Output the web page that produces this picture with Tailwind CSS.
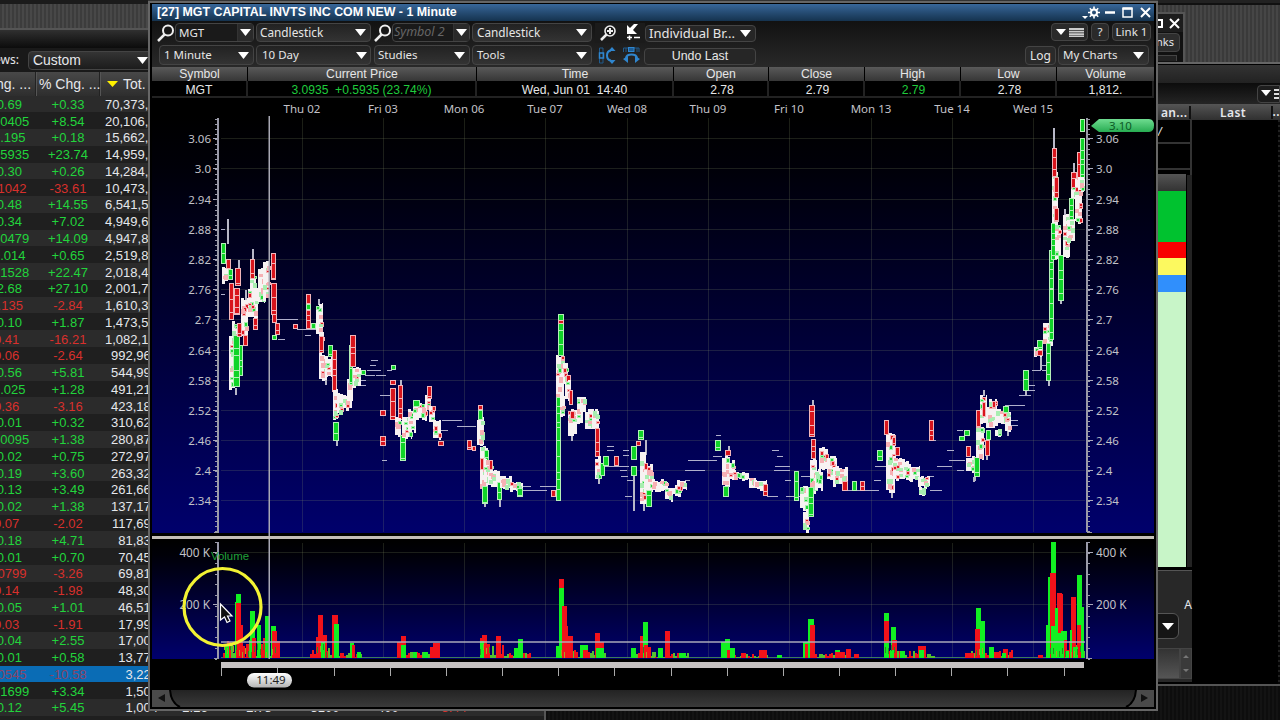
<!DOCTYPE html>
<html lang="en">
<head>
    <meta charset="UTF-8">
    <meta name="viewport" content="width=device-width, initial-scale=1.0">
    <title>MGT - 1 Minute</title>
    <script src="https://cdn.jsdelivr.net/npm/@tailwindcss/browser@4"></script>
</head>
<body class="relative w-[1280px] h-[720px] overflow-hidden bg-black font-['Liberation_Sans',sans-serif] text-[13px] text-gray-200">

    <!-- Watch list window -->
    <div class="absolute left-0 top-0 w-[546px] h-[720px] overflow-hidden bg-[#202020] border-r-2 border-[#555]">
        <div class="h-[28px] border-t-4 border-[#1b1b1b] bg-[repeating-linear-gradient(90deg,#3c3c3c_0_2px,#484848_2px_4px)]"></div>
        <div class="h-[2px] bg-[#555]"></div>
        <div class="h-[18px] bg-linear-to-b from-[#303030] to-[#0c0c0c]"></div>
        <div class="h-[24px] flex items-center bg-[#191919] font-['Noto_Sans',sans-serif]">
            <span class="w-[27px] -ml-[6px] text-[12px] leading-none whitespace-nowrap">ews:</span>
            <div class="ml-[7px] w-[124px] h-[19px] flex items-center justify-between rounded border border-[#444] bg-linear-to-b from-[#343434] to-[#1c1c1c] pl-[4px] pr-[3px] pt-px font-['Liberation_Sans',sans-serif] text-[13.9px]">
                Custom
                <svg width="11" height="7"><path d="M0 0H11L5.5 7Z" fill="#fff"/></svg>
            </div>
        </div>
        <div class="h-[23.5px] flex bg-linear-to-b from-[#484848] to-[#2e2e2e] text-[14px] items-center whitespace-nowrap">
            <div class="w-[36px] h-full pt-[2px] border-r border-[#222]"><span class="-ml-[4px]">hg. ...</span></div>
            <div class="w-[64px] h-full pt-[2px] pl-[2px] border-r border-[#222] border-l border-l-[#555]">% Chg. ...</div>
            <div class="h-full flex items-center gap-[5px] pl-[6px] pt-px border-l border-[#555]"><svg width="11" height="6"><path d="M0 0H11L5.5 6Z" fill="#fff200"/></svg>Tot.</div>
        </div>
        <div id="rows"></div>
    </div>

    <!-- Windows on the right side of the desktop -->
    <div class="absolute left-[1150px] top-0 w-[130px] h-[720px] overflow-hidden bg-black">
        <div class="h-[3px] bg-[#222]"></div>
        <div class="h-[59px] flex bg-[repeating-linear-gradient(90deg,#3a3a3a_0_2px,#464646_2px_4px)] border-t-2 border-[#111]">
            <div class="mt-[7px] w-[35px] border-t-2 border-r-2 border-[#555] bg-[#111]">
                <div class="h-[18px] flex items-center justify-end gap-[6px] pr-[3px] bg-[#1d1d1d]">
                    <div class="size-[9px] border-2 border-white"></div>
                    <svg width="11" height="11" stroke="#fff" stroke-width="2"><path d="M1 1L10 10M10 1L1 10"/></svg>
                </div>
                <div class="h-[19px] mt-px mr-[3px] flex items-center justify-end pr-[5px] rounded border border-[#444] bg-[#2d2d2d] font-['Noto_Sans',sans-serif] text-[11px]">Links</div>
                <div class="mt-[3px] mr-[6px] h-[6px] border-t border-r border-[#444] bg-[#222]"></div>
            </div>
        </div>
        <div class="h-[2px] bg-[#666]"></div>
        <div class="h-[18px] mt-px bg-linear-to-b from-[#333] to-[#222]"></div>
        <div class="h-[21px] flex justify-end items-center bg-linear-to-b from-[#0c0c0c] to-[#252525]">
            <div class="w-[23px] h-[18px] flex items-center gap-[3px] pl-[3px] rounded-l border border-[#444] bg-[#1d1d1d]">
                <svg width="10" height="7"><path d="M0 0H10L5 6Z" fill="#fff"/></svg>
                <svg width="5" height="10" fill="#ddd"><path d="M0 0H5V2H0ZM0 4H5V6H0ZM0 8H5V10H0Z"/></svg>
            </div>
        </div>
        <div class="h-[16px] flex items-center text-[12px] font-semibold tracking-[0.4px] bg-linear-to-b from-[#555] to-[#303030] font-['Noto_Sans',sans-serif] leading-none">
            <div class="w-[41px] pt-px text-right border-r-2 border-[#111] pr-px">an...</div>
            <div class="w-[83px] pt-px pl-[5px] text-center border-r-2 border-[#111]">Last</div>
            <div>..</div>
        </div>
        <div class="h-[564px] flex">
            <div class="w-[42px] border-r-2 border-[#333] h-[55px]">
                <div class="h-[24px] pt-[5px] pl-[8px] border-b-2 border-[#333] italic leading-none">/</div>
                <div class="h-[26px] border-b-2 border-[#333]"></div>
                <div class="mt-[4px] h-[17px] w-[36px] bg-linear-to-b from-[#555] to-[#333]"></div>
                <div class="h-[51px] w-[36px] bg-[#00c22f]"></div>
                <div class="h-[16px] w-[36px] bg-[#f80000]"></div>
                <div class="h-[17px] w-[36px] bg-[#fcf95f]"></div>
                <div class="h-[17px] w-[36px] bg-[#308ffc]"></div>
                <div class="h-[275px] w-[36px] bg-[#c8f5c8]"></div>
                <div class="mt-[3px] w-[42px] h-[112px] border-t border-[#555] bg-[#282828]">
                    <div class="h-[42px] pt-[28px] text-right font-['Noto_Sans',sans-serif] text-[12px] leading-none">A</div>
                    <div class="h-[26px] w-[29px] flex items-center justify-end pr-[4px] border border-[#555] rounded-md bg-[#151515]"><svg width="12" height="7"><path d="M0 0H12L6 7Z" fill="#fff"/></svg></div>
                    <div class="mt-[9px] h-[31px] flex">
                        <div class="w-[30px] border border-[#444] bg-linear-to-b from-[#333] to-[#555]"></div>
                        <div class="w-[12px] border border-[#444] bg-[#3a3a3a]"><svg width="10" height="30" fill="#777"><path d="M5 6L8 9H2ZM2 20H8L5 23Z"/></svg></div>
                    </div>
                </div>
            </div>
            <!-- frame right of the colour column -->
            <div class="-ml-[5px] mt-[55px] w-[5px] h-[392px] bg-[#232323]"></div>
            <div class="flex-1"></div>
            <div class="w-[2px] bg-[repeating-linear-gradient(180deg,#222_0_2px,#060606_2px_5px)]"></div>
        </div>
        <div class="h-[2px] bg-[#555]"></div>
        <div class="h-[35px] bg-[repeating-linear-gradient(90deg,#0d0d0d_0_2px,#131313_2px_4px)]"></div>
    </div>
    <div class="absolute left-[546px] top-[711px] w-[610px] h-[9px] bg-[repeating-linear-gradient(90deg,#0d0d0d_0_2px,#131313_2px_4px)]"></div>
    <div class="absolute left-[148px] top-0 w-[1010px] h-[4px] bg-[#333]"></div>

    <!-- Chart window -->
    <div class="absolute left-[148px] top-[1px] w-[1010px] h-[710px] flex flex-col border-2 border-[#666] bg-black px-[2px] pt-px text-[#e6e6e6]">
        <div class="h-[17px] shrink-0 flex items-center pl-[5px] pr-[2px] bg-linear-to-b from-[#38679a] to-[#15334f] text-[12.4px] font-bold text-white whitespace-nowrap">
            <span class="-mt-px">[27] MGT CAPITAL INVTS INC COM NEW - 1 Minute</span>
            <svg class="ml-auto" width="70" height="15" viewBox="0 0 70 15" fill="none" stroke="#fff">
                <path d="M0 11H6L3 14Z" fill="#fff" stroke="none"/>
                <circle cx="12" cy="7.500" r="3" stroke-width="2"/>
                <path d="M12 1.500V4.500M12 10.500V13.500M6 7.500H9M15 7.500H18M7.800 3.300L9.700 5.200M14.300 9.800L16.200 11.700M16.200 3.300L14.300 5.200M9.700 9.800L7.800 11.700" stroke-width="1.600"/>
                <path d="M23 7.500H33" stroke-width="2.500"/>
                <rect x="41" y="3.500" width="9" height="8.500" stroke-width="1.500"/><path d="M40.500 3.500H50.500" stroke-width="2.500"/>
                <path d="M59 3L68 12M68 3L59 12" stroke-width="2"/>
            </svg>
        </div>

        <!-- Toolbar -->
        <div class="h-[46px] shrink-0 bg-linear-to-b from-[#121212] to-[#292929] font-['Noto_Sans',sans-serif] text-[11.5px] leading-none whitespace-nowrap">
            <div class="h-[22px] pt-px flex items-center">
                <svg class="ml-[4px]" width="19" height="20" fill="none" stroke="#eee"><circle cx="12" cy="7.500" r="5" stroke-width="2"/><path d="M8.500 11.500L2 18" stroke-width="2.500"/></svg>
                <div class="w-[79px] h-[19px] flex items-center rounded border border-[#444] bg-[#1a1a1a]">
                    <span class="flex-1 pl-[3px]">MGT</span>
                    <span class="w-[16px] h-full flex items-center justify-center border-l border-[#333] bg-[#2a2a2a]"><svg width="11" height="7"><path d="M0 0H11L5.500 7Z" fill="#fff"/></svg></span>
                </div>
                <div class="ml-[2px] w-[115px] h-[19px] flex items-center justify-between pl-[3px] pr-[4px] rounded border border-[#444] bg-linear-to-b from-[#222] to-[#333] text-[11.8px]">Candlestick<svg width="11" height="7"><path d="M0 0H11L5.500 7Z" fill="#fff"/></svg></div>
                <svg class="ml-[2px]" width="19" height="20" fill="none" stroke="#eee"><circle cx="12" cy="7.500" r="5" stroke-width="2"/><path d="M8.500 11.500L2 18" stroke-width="2.500"/></svg>
                <div class="w-[78px] h-[19px] flex items-center rounded border border-[#444] bg-[#1a1a1a]">
                    <span class="flex-1 pb-px pl-px italic text-[12.5px] text-[#666]">Symbol 2</span>
                    <span class="w-[16px] h-full flex items-center justify-center border-l border-[#333] bg-[#2a2a2a]"><svg width="11" height="7"><path d="M0 0H11L5.500 7Z" fill="#fff"/></svg></span>
                </div>
                <div class="ml-[2px] w-[120px] h-[19px] flex items-center justify-between px-[4px] rounded border border-[#444] bg-linear-to-b from-[#222] to-[#333] text-[11.8px]">Candlestick<svg width="11" height="7"><path d="M0 0H11L5.500 7Z" fill="#fff"/></svg></div>
                <div class="ml-[3px] w-[26px] h-[20px] flex items-center justify-center bg-[#1b1b1b]"><svg width="18" height="18" fill="none" stroke="#eee"><circle cx="11" cy="7" r="5" stroke-width="1.600"/><path d="M7.500 10.500L2 16" stroke-width="2.500"/><path d="M8 7H14M11 4V10" stroke-width="2"/></svg></div>
                <div class="w-[24px] h-[20px] flex items-center justify-center bg-[#1b1b1b]"><svg width="16" height="17" fill="#fff"><path d="M2 1L5 4L9 0L13 0L8 6L12 10H2Z"/><path d="M2 13.500H7M4.500 11.500V16M9 13.500H15" stroke="#fff" stroke-width="1.600"/></svg></div>
                <div class="w-[111px] h-[17px] mt-[2px] flex items-center justify-between pl-[3px] pr-[4px] rounded border border-[#444] bg-[#262626] text-[13px]">Individual Br...<svg width="11" height="7"><path d="M0 0H11L5.500 7Z" fill="#fff"/></svg></div>
                <div class="ml-auto mb-px w-[37px] h-[18px] flex items-center justify-center gap-[3px] rounded border border-[#444] bg-[#2a2a2a]">
                    <svg width="10" height="6"><path d="M0 0H10L5 6Z" fill="#fff"/></svg>
                    <svg width="15" height="9" fill="#ccc"><path d="M0 0H15V2H0ZM0 2.800H15V4.500H0ZM0 5.300H15V7H0ZM0 7.600H15V9H0Z"/></svg>
                </div>
                <div class="ml-[3px] mb-px w-[18px] h-[18px] flex items-center justify-center rounded border border-[#444] bg-[#2a2a2a]">?</div>
                <div class="ml-[3px] mr-[3px] mb-px w-[39px] h-[18px] flex items-center justify-center rounded border border-[#444] bg-[#2a2a2a]">Link 1</div>
            </div>
            <div class="h-[24px] flex items-center">
                <div class="ml-[7px] w-[95px] h-[20px] flex items-center justify-between px-[4px] rounded border border-[#444] bg-linear-to-b from-[#222] to-[#333]">1 Minute<svg width="11" height="7"><path d="M0 0H11L5.500 7Z" fill="#fff"/></svg></div>
                <div class="ml-[2px] w-[115px] h-[20px] flex items-center justify-between pl-[5px] pr-[3px] rounded border border-[#444] bg-linear-to-b from-[#222] to-[#333]">10 Day<svg width="11" height="7"><path d="M0 0H11L5.500 7Z" fill="#fff"/></svg></div>
                <div class="ml-[3px] w-[96px] h-[20px] flex items-center justify-between pl-[3px] pr-[4px] rounded border border-[#444] bg-linear-to-b from-[#222] to-[#333]">Studies<svg width="11" height="7"><path d="M0 0H11L5.500 7Z" fill="#fff"/></svg></div>
                <div class="ml-[2px] w-[120px] h-[20px] flex items-center justify-between px-[4px] rounded border border-[#444] bg-linear-to-b from-[#222] to-[#333]">Tools<svg width="11" height="7"><path d="M0 0H11L5.500 7Z" fill="#fff"/></svg></div>
                <svg class="ml-[6px]" width="19" height="19" fill="none" stroke="#2f86cf"><path d="M1.500 4V2H5V17H1.500V15M1.500 4V7M1.500 12V15" stroke="#205a8c"/><rect x="1.500" y="7" width="4" height="5" stroke-width="1.500"/><path d="M13 4.500Q9 5 9 9.500Q9 14 13 14.500" stroke-width="2"/><path d="M10.500 5L14 1L17.500 5ZM10.500 14L14 18L17.500 14Z" fill="#2f86cf" stroke="none"/></svg>
                <svg class="ml-[5px]" width="19" height="19" fill="none" stroke="#2f86cf"><path d="M1.500 6V2H17V6M4 6V2M15 6V2" stroke="#205a8c"/><rect x="6.500" y="1.500" width="5.500" height="4" fill="#1d5d96"/><path d="M4 12Q4.500 8.500 9.500 8.500Q14.500 8.500 15 12" stroke-width="2"/><path d="M1 13L6 10V17ZM18 13L13 10V17Z" fill="#2f86cf" stroke="none"/></svg>
                <div class="ml-[3px] mt-[3px] w-[112px] h-[17px] flex items-center justify-center rounded border border-[#444] bg-[#262626] font-['Liberation_Sans',sans-serif] text-[12.4px]">Undo Last</div>
                <div class="ml-auto w-[31px] h-[19px] pt-[2px] flex items-center justify-center rounded border border-[#444] bg-[#2a2a2a] text-[12px]">Log</div>
                <div class="ml-[2px] mr-[5px] w-[91px] h-[20px] flex items-center justify-between px-[4px] rounded border border-[#444] bg-linear-to-b from-[#222] to-[#333]">My Charts<svg width="11" height="7"><path d="M0 0H11L5.500 7Z" fill="#fff"/></svg></div>
            </div>
        </div>

        <!-- Quote line -->
        <div class="shrink-0 grid grid-cols-[96px_229px_197px_95px_96px_96px_96px_97px] text-center text-[12.2px]">
            <div class="h-[14px] leading-[15px] bg-linear-to-b from-[#5a5a5a] to-[#363636] border-r border-black">Symbol</div>
            <div class="h-[14px] leading-[15px] bg-linear-to-b from-[#5a5a5a] to-[#363636] border-r border-black">Current Price</div>
            <div class="h-[14px] leading-[15px] bg-linear-to-b from-[#5a5a5a] to-[#363636] border-r border-black">Time</div>
            <div class="h-[14px] leading-[15px] bg-linear-to-b from-[#5a5a5a] to-[#363636] border-r border-black">Open</div>
            <div class="h-[14px] leading-[15px] bg-linear-to-b from-[#5a5a5a] to-[#363636] border-r border-black">Close</div>
            <div class="h-[14px] leading-[15px] bg-linear-to-b from-[#5a5a5a] to-[#363636] border-r border-black">High</div>
            <div class="h-[14px] leading-[15px] bg-linear-to-b from-[#5a5a5a] to-[#363636] border-r border-black">Low</div>
            <div class="h-[14px] leading-[15px] bg-linear-to-b from-[#5a5a5a] to-[#363636]">Volume</div>
            <div class="h-[17px] leading-[19px] border-r-2 border-b-2 border-[#222]">MGT</div>
            <div class="h-[17px] leading-[19px] border-r-2 border-b-2 border-[#222] text-[#1fcb3c] text-[12.1px] whitespace-pre">3.0935  +0.5935 (23.74%)</div>
            <div class="h-[17px] leading-[19px] border-r-2 border-b-2 border-[#222] whitespace-pre">Wed, Jun 01  14:40</div>
            <div class="h-[17px] leading-[19px] border-r-2 border-b-2 border-[#222] pl-[3px]">2.78</div>
            <div class="h-[17px] leading-[19px] border-r-2 border-b-2 border-[#222] pl-[3px]">2.79</div>
            <div class="h-[17px] leading-[19px] border-r-2 border-b-2 border-[#222] pl-[3px] text-[#1fcb3c]">2.79</div>
            <div class="h-[17px] leading-[19px] border-r-2 border-b-2 border-[#222] pl-[3px]">2.78</div>
            <div class="h-[17px] leading-[19px] border-r-2 border-b-2 border-[#222] pl-[2px]">1,812.</div>
        </div>

        <svg id="chart" class="shrink-0 block" width="1002" height="591" viewBox="152 98 1002 591" shape-rendering="crispEdges"></svg>

        <!-- Scroll bar -->
        <div class="h-[17px] mt-px flex justify-between bg-linear-to-b from-[#232323] to-[#3a3a3a]">
            <svg width="30" height="17"><path d="M0 0H18Q19 13 28 17H0Z" fill="#4a4a4a"/><path d="M18 0Q19 13 28 17" stroke="#000" stroke-width="2" fill="none"/><path d="M13 4V12L6 8Z" fill="#111"/></svg>
            <svg width="30" height="17"><path d="M30 0H12Q11 13 2 17H30Z" fill="#4a4a4a"/><path d="M12 0Q11 13 2 17" stroke="#000" stroke-width="2" fill="none"/><path d="M17 4V12L24 8Z" fill="#111"/></svg>
        </div>
    </div>

    <script>
        // Watch list: change, % change, volume
        const list = `+0.69 +0.33 70,373,210|+0.0405 +8.54 20,106,340|+0.195 +0.18 15,662,100|+0.5935 +23.74 14,959,200|+0.30 +0.26 14,284,110|-0.1042 -33.61 10,473,900|+0.48 +14.55 6,541,520|+0.34 +7.02 4,949,610|+0.0479 +14.09 4,947,850|+0.014 +0.65 2,519,830|+0.1528 +22.47 2,018,420|+2.68 +27.10 2,001,710|-0.135 -2.84 1,610,320|+0.10 +1.87 1,473,510|-0.41 -16.21 1,082,120|-0.06 -2.64 992,961|+0.56 +5.81 544,992|+0.025 +1.28 491,210|-0.36 -3.16 423,182|+0.01 +0.32 310,624|+0.0095 +1.38 280,871|+0.02 +0.75 272,971|+0.19 +3.60 263,324|+0.13 +3.49 261,660|+0.02 +1.38 137,171|-0.07 -2.02 117,695|+0.18 +4.71 81,832|+0.01 +0.70 70,452|-0.0799 -3.26 69,817|-0.14 -1.98 48,302|+0.05 +1.01 46,517|-0.03 -1.91 17,992|+0.04 +2.55 17,004|+0.01 +0.58 13,773|-0.0545 -10.58 3,224|+0.1699 +3.34 1,502|+0.12 +5.45 1,004|-0.01 -0.18 900`.split('|');
        document.getElementById('rows').innerHTML = list.map((line, i) => {
            const [chg, pct, vol] = line.split(' ');
            const color = i == 34 ? 'text-[#8a4565]' : chg[0] == '+' ? 'text-[#22d43c]' : 'text-[#d8302c]';
            const bg = i == 34 ? 'bg-[#0a6cb5]' : i % 2 ? 'bg-[#1f1f1f]' : 'bg-[#2b2b2b]';
            const nudge = chg[0] == '-' ? 'pr-[2px]' : '';
            const extra = i < 36 ? '' : `<span class="w-[58px] ml-[8px] text-center">2.26</span><span class="w-[70px] text-center">2.78</span><span class="w-[62px] text-center">3100</span><span class="w-[64px] text-center">400</span><span class="w-[64px] text-center ${i == 36 ? 'text-[#d8302c]' : 'text-[#22d43c]'}">${i == 36 ? '-3.44' : '4%'}</span>`;
            return `<div class="h-[16.78px] flex items-center leading-none whitespace-nowrap pt-px ${bg}">
                <span class="w-[71px] -ml-[30px] flex justify-center ${nudge} ${color}">${chg}</span>
                <span class="w-[54px] flex justify-center ${color}">${pct}</span>
                <span class="ml-[10px] w-[53px]"><span class="inline-block min-w-[53px] text-right">${vol}</span></span>${extra}
            </div>`;
        }).join('');

        // Fixed seed so the chart is the same on each load
        let seed = 7;
        const rnd = () => (seed = (seed * 16807) % 2147483647) / 2147483647;

        let out = '';
        const rect = (x, y, w, h, fill, o = 1) => out += `<rect x="${x}" y="${y}" width="${w}" height="${h}" fill="${fill}" opacity="${o}"/>`;
        const text = (x, y, s, fill = '#c2c2c8', anchor = 'middle', size = 11.5, font = 'Noto Sans') => out += `<text x="${x}" y="${y}" fill="${fill}" text-anchor="${anchor}" font-size="${size}" font-family="${font}, sans-serif">${s}</text>`;

        out += `<defs>
            <linearGradient id="sky" x1="0" y1="0" x2="0" y2="1"><stop offset="0" stop-color="#000"/><stop offset=".12" stop-color="#000008"/><stop offset="1" stop-color="#00006c"/></linearGradient>
            <linearGradient id="tag" x1="0" y1="0" x2="0" y2="1"><stop offset="0" stop-color="#6fdc90"/><stop offset="1" stop-color="#27ac52"/></linearGradient>
            <linearGradient id="pill" x1="0" y1="0" x2="0" y2="1"><stop offset="0" stop-color="#fff"/><stop offset="1" stop-color="#b5b5b5"/></linearGradient></defs>`;
        rect(152, 98, 1002, 591, '#000');
        rect(152, 116, 1002, 417, 'url(#sky)');
        rect(152, 541, 1002, 118, 'url(#sky)');

        // Grid and date labels
        const days = ['Thu 02', 'Fri 03', 'Mon 06', 'Tue 07', 'Wed 08', 'Thu 09', 'Fri 10', 'Mon 13', 'Tue 14', 'Wed 15'];
        days.forEach((d, i) => {
            const x = Math.round(301.500 + i * 81.300);
            rect(x, 118, 1, 414, '#8a9a70', .2);
            rect(x, 543, 1, 115, '#8a9a70', .2);
            text(x, 113, d);
        });
        for (let i = 0; i < 13; i++) {
            const y = Math.round(138.300 + i * 30.180);
            const label = String(+(3.06 - i * .06).toFixed(2)).replace(/^3$/, '3.0');
            rect(221, y, 864, 1, '#8a9a70', .2);
            rect(213, y, 6, 1, '#aab');
            rect(1087, y, 6, 1, '#aab');
            text(211, y + 4.500, label, '#c2c2c8', 'end');
            text(1096, y + 4.500, label, '#c2c2c8', 'start');
        }
        [[552, '400 K'], [604, '200 K']].forEach(([y, s]) => {
            rect(221, y, 864, 1, '#8a9a70', .2);
            rect(213, y, 6, 1, '#aab');
            rect(1087, y, 6, 1, '#aab');
            text(210, y + 4.500, s, '#c2c2c8', 'end', 11.8);
            text(1096, y + 4.500, s, '#c2c2c8', 'start', 11.8);
        });
        [[217, 215], [1086, 1088]].forEach(([x, t]) => {
            rect(x, 118, 1.500, 414, '#9a9aa8');
            rect(x, 542, 1.500, 117, '#9a9aa8');
            for (let y = 119; y < 532; y += 5.030) rect(t, Math.round(y), 2, 1, '#9a9aa8');
            for (let y = 542; y < 659; y += 10.600) rect(t, Math.round(y), 2, 1, '#9a9aa8');
            rect(t - 1, 532, 5, 1, '#9a9aa8');
            rect(t - 1, 658, 5, 1, '#9a9aa8');
        });

        // Trades without range: x1 x2 y
        `277 298 319|278 285 339|297 317 329|305 311 335|371 378 360|370 376 365|367 381 370|365 375 375|376 386 375|387 392 370|361 366 380|361 366 385|380 391 395|382 387 460|442 462 420|440 448 430|457 476 426|522 531 486|523 547 490|540 558 486|607 614 446|607 614 450|602 629 466|623 629 450|623 629 455|620 627 470|621 628 476|627 633 480|625 632 496|685 690 480|685 705 470|688 708 460|701 717 460|713 722 456|716 721 435|767 778 496|772 779 450|777 783 456|775 790 466|774 790 470|785 791 480|786 800 496|801 810 476|847 867 490|865 879 490|875 886 466|874 881 480|930 934 476|930 942 490|937 952 466|947 954 450|949 965 460|957 964 470|957 963 430|933 936 440|1005 1025 405|1011 1018 420|1011 1018 425|1019 1031 395|1028 1035 385|1028 1035 390|1032 1041 370|1042 1048 365|1042 1048 370|221 225 229|221 225 294`
            .split('|').forEach(s => { const [a, b, y] = s.split(' '); rect(a, y, b - a, 1, '#b0b0cc'); });
        // Wicks: x y1 y2
        `227 219 244|238 260 269|252 249 260|235 388 395|318 299 305|325 380 385|336 440 446|400 380 386|484 500 507|499 499 507|571 436 441|598 478 484|633 476 511|645 440 455|643 504 511|728 446 451|812 400 406|891 490 498|974 476 481|983 390 396|986 455 460|1040 356 370|1025 390 395|1048 380 386|1053 128 149|1060 300 304|1064 209 215|1073 163 173|1007 430 436|973 477 482|245 290 300`
            .split('|').forEach(s => { const [x, a, b] = s.split(' '); rect(x, a, 1.500, b - a, '#b8b8c8'); });

        // Price blocks: m = dense white cluster, g / r = single candle, x1 x2 y1 y2
        const blocks = `m 222 228 268 283|g 221 226 243 264|r 226 231 259 269|g 228 233 269 280|r 229 234 283 320|m 229 235 335 389|m 232 238 322 340|g 233 240 335 387|g 239 243 345 376|m 241 248 299 335|r 235 241 268 286|r 234 240 288 315|r 237 242 323 337|r 243 248 335 346|m 248 258 287 318|r 253 258 318 330|m 250 256 275 290|r 250 255 259 279|m 258 265 268 303|m 263 270 262 300|r 271 276 253 280|r 271 277 283 315|r 272 277 314 323|r 275 280 323 335|g 272 277 335 340|r 293 298 324 329|r 306 311 294 304|g 306 311 304 310|r 306 311 310 329|g 311 316 323 329|m 316 323 304 333|m 319 324 333 355|r 319 324 336 353|m 319 327 355 380|g 328 333 345 357|m 325 332 357 377|r 332 337 350 392|m 333 338 390 421|g 333 339 422 441|m 337 343 393 415|m 343 352 395 410|m 347 353 380 403|g 349 353 345 385|r 350 356 335 367|m 353 361 366 388|g 361 366 370 375|g 391 396 365 370|r 390 396 380 385|r 390 396 388 420|r 398 403 385 420|r 380 386 410 416|r 380 386 436 446|m 395 401 418 437|g 400 406 435 461|m 402 412 416 438|m 408 416 410 432|m 413 427 402 420|g 413 420 400 407|m 425 431 396 410|r 427 432 386 399|m 429 435 405 422|m 433 441 420 440|r 438 444 441 446|r 467 472 440 450|r 472 476 446 451|
m 477 484 418 445|r 478 483 405 410|g 478 483 410 420|m 480 488 446 490|r 480 484 458 470|g 482 488 486 504|m 484 493 458 482|g 484 489 450 458|r 489 493 460 470|m 488 500 470 486|g 497 502 482 500|m 500 512 476 490|m 510 523 481 492|g 517 523 488 497|r 551 556 490 497|m 556 564 355 400|g 556 561 397 501|g 558 564 314 356|r 558 564 320 324|m 560 565 397 417|m 563 568 363 385|r 566 571 375 396|m 565 571 380 400|r 569 573 390 405|m 568 577 410 435|r 570 575 411 419|m 577 583 396 423|m 580 586 396 412|m 585 594 410 430|m 592 599 410 428|r 595 600 428 457|m 595 601 457 480|g 600 605 463 476|g 603 609 456 466|r 614 619 456 466|g 631 637 446 460|g 631 637 466 476|g 638 644 430 440|r 636 641 441 446|m 640 646 450 504|m 644 653 464 492|r 644 648 463 470|g 646 652 490 507|m 652 668 480 491|m 665 673 488 501|m 672 681 486 496|m 677 687 481 491|
g 715 721 440 451|m 722 730 456 486|r 725 731 450 456|g 723 729 486 497|m 729 735 461 481|m 733 749 471 480|m 749 756 477 487|m 754 767 481 490|r 763 768 484 496|g 794 799 471 501|m 800 808 486 510|m 803 809 510 532|m 810 817 458 493|g 808 814 487 517|r 809 815 405 437|r 811 816 439 459|m 815 823 470 490|m 819 828 447 470|m 827 837 456 480|m 833 848 467 486|r 842 848 481 491|g 852 857 481 491|r 860 865 481 491|g 877 883 450 461|m 886 895 433 492|r 884 889 420 435|r 892 896 437 446|r 895 900 447 456|m 893 905 457 480|m 903 911 462 480|m 910 920 467 481|m 918 930 476 488|m 919 925 486 497|r 929 934 420 441|g 959 965 436 441|g 964 970 430 436|r 966 971 446 457|m 966 975 456 472|g 974 980 457 477|m 976 984 425 460|r 976 981 410 428|m 980 987 396 423|r 982 986 402 417|g 986 991 430 440|r 985 990 440 456|m 986 995 408 428|m 989 997 400 416|r 992 996 401 409|m 995 1011 410 425|m 995 1001 428 436|g 1003 1009 406 413|m 1005 1011 417 433|
g 1023 1029 370 391|g 1037 1043 340 350|m 1034 1042 347 356|r 1037 1043 350 356|m 1043 1053 323 346|g 1046 1051 343 381|g 1049 1054 288 340|g 1049 1054 250 290|m 1052 1058 170 235|g 1051 1057 223 260|m 1055 1061 223 260|r 1052 1057 148 177|r 1054 1059 177 198|r 1054 1059 208 222|g 1058 1064 255 301|m 1063 1070 213 258|m 1067 1075 220 243|g 1069 1074 198 220|m 1071 1077 180 200|r 1071 1077 172 188|m 1075 1082 180 223|r 1077 1081 152 180|g 1080 1085 138 180|m 1078 1085 178 192|g 1080 1085 119 132`;
        blocks.replace(/\n/g, '').split('|').forEach(s => {
            const [k, ...p] = s.split(' ');
            const [a, b, c, d] = p.map(Number);
            if (k == 'm') {
                // uneven top and bottom edges
                for (let x = a; x < b; x += 3) {
                    const t = c - 1 + Math.floor(rnd() * 4), e = d - 2 + Math.floor(rnd() * 4);
                    rect(x, t, Math.min(3, b - x), e - t, '#f7f2f2');
                }
                // pink / green candles inside the cluster
                for (let i = 0; i < (b - a) * (d - c) / 30; i++) {
                    const x = a + Math.floor(rnd() * (b - a - 2)), y = c + 1 + Math.floor(rnd() * (d - c - 5));
                    const up = rnd() < .5, h = 2 + Math.floor(rnd() * 3);
                    rect(x, y, 4, h + 1, up ? '#a8eeb0' : '#f6b0b4');
                    if (rnd() < .45) rect(x + 1, y + 1, 2, h - 1, up ? '#22d838' : '#dc1c24');
                }
            } else {
                rect(a, c, b - a, d - c, k == 'g' ? '#b4f0b8' : '#f2b6ba');
                for (let y = c + 1; y < d - 1;) {
                    const h = Math.min(d - 1 - y, 4 + Math.floor(rnd() * 12));
                    rect(a + 1, y, b - a - 2, h, k == 'g' ? '#10d428' : '#d8141c');
                    y += h + 1;
                }
            }
        });

        // Volume, low activity first: x1 x2 max height
        rect(221, 657, 864, 1, '#4c9a58', .8);
        [[223, 278, 20], [310, 332, 12], [332, 362, 5], [398, 440, 6], [480, 505, 13], [505, 530, 5], [560, 605, 8], [632, 655, 10], [655, 688, 5], [722, 768, 6], [803, 850, 6], [885, 935, 7], [965, 1012, 8], [1047, 1084, 18]].forEach(([a, b, h]) => {
            for (let x = a; x < b; x += 2) {
                const v = 1 + Math.floor(rnd() * h);
                rect(x, 658 - v, 2, v, rnd() < .5 ? '#f0141c' : '#55c030');
            }
        });
        // x width top color
        `225 4 645 g|235 5 602 g|236 5 594 g|236 5 603 r|240 3 625 r|250 5 611 g|252 4 638 r|257 4 625 g|261 4 645 r|265 4 616 g|271 5 626 g|272 5 631 r|276 4 641 r|246 3 644 r|316 5 637 r|318 5 615 r|323 4 635 r|321 4 642 g|332 6 615 r|334 5 624 g|350 4 643 g|352 3 645 r|357 4 652 g|397 5 642 r|401 5 636 r|401 5 645 g|423 5 652 g|430 4 647 r|433 7 643 r|413 4 652 g|480 6 638 r|482 5 635 r|480 4 641 g|487 3 644 r|496 5 636 r|514 4 648 g|518 5 639 g|556 4 646 g|559 5 579 r|559 5 588 g|562 5 606 r|564 4 626 r|568 5 636 r|559 3 634 g|580 8 645 g|583 5 650 r|595 5 633 r|600 4 642 r|596 8 648 g|631 5 648 g|640 4 636 r|643 5 622 g|644 4 645 r|648 3 647 r|658 5 648 g|665 5 631 r|679 7 653 g|721 8 642 g|725 5 639 g|727 5 650 r|730 5 648 g|741 5 653 r|759 8 650 r|777 5 655 g|803 5 642 g|805 8 644 r|808 6 619 g|810 5 625 r|835 5 650 g|835 10 652 r|846 5 649 r|854 5 654 r|884 5 613 g|884 5 621 r|884 5 643 g|891 5 627 g|892 5 640 r|890 4 650 g|900 5 651 g|918 8 646 r|919 5 650 g|966 8 653 r|976 5 608 g|980 5 621 g|975 5 629 r|980 5 642 g|989 5 647 g|994 5 652 r|1003 5 649 r|1002 4 653 g|1038 5 655 r|1046 4 625 g|1048 4 577 g|1051 5 542 g|1050 6 573 r|1057 5 593 r|1058 5 594 r|1055 3 608 g|1051 5 626 g|1056 6 633 g|1061 6 631 g|1064 3 640 r|1071 5 597 r|1077 5 575 g|1079 2 607 g|1077 4 625 r|1081 3 607 g|1070 2 630 g|1073 5 647 g|1065 4 651 g`
            .split('|').forEach(s => { const [x, w, y, c] = s.split(' '); rect(x, y, w, 658 - y, c == 'g' ? '#12f022' : '#f2121a'); });
        // thin lines between the bars that stand close together
        [[224, 278], [317, 328], [480, 492], [561, 566], [643, 648], [885, 896], [976, 984], [1050, 1066], [1071, 1082]].forEach(([a, b]) => {
            for (let x = a; x < b; x += 3) rect(x, 644 + Math.floor(rnd() * 9), 1, 6, rnd() < .5 ? '#a8a020' : '#2a8a20');
        });
        rect(221, 641, 864, 1.500, '#b4b4c0', .7);

        text(211, 560, 'Volume', '#21a038', 'start', 11.4, 'Liberation Sans');
        out += `<rect x="268.500" y="116" width="1.500" height="543" fill="#a8a8b4" shape-rendering="auto"/>`;
        rect(152, 536, 1002, 3, '#c4bfba');

        // Time slider
        rect(221, 662, 863, 6, '#c6c2c2');
        for (let i = 0; i < 16; i++) rect(Math.round(221.300 + i * 56.150), 668, 1, 8, '#aaa');
        out += `<g shape-rendering="auto"><rect x="247" y="673" width="45" height="14.500" rx="7" fill="url(#pill)"/>
            <path d="M1091 126L1099 119H1149Q1154 119 1154 125.500Q1154 132 1149 132H1099Z" fill="url(#tag)"/>
            <circle cx="222.500" cy="607" r="38.500" fill="none" stroke="#f2f233" stroke-width="3.200"/>
            <path d="M220.500 604V620L224.500 617L227 622.500L230 621L227.500 616H232Z" fill="#111" stroke="#fff" stroke-width="1.200"/></g>`;
        text(271, 684, '11:49', '#222', 'middle', 11.5);
        text(1120.500, 130, '3.10', '#0c5a26', 'middle', 11.5);

        document.getElementById('chart').innerHTML = out;
    </script>
</body>
</html>
